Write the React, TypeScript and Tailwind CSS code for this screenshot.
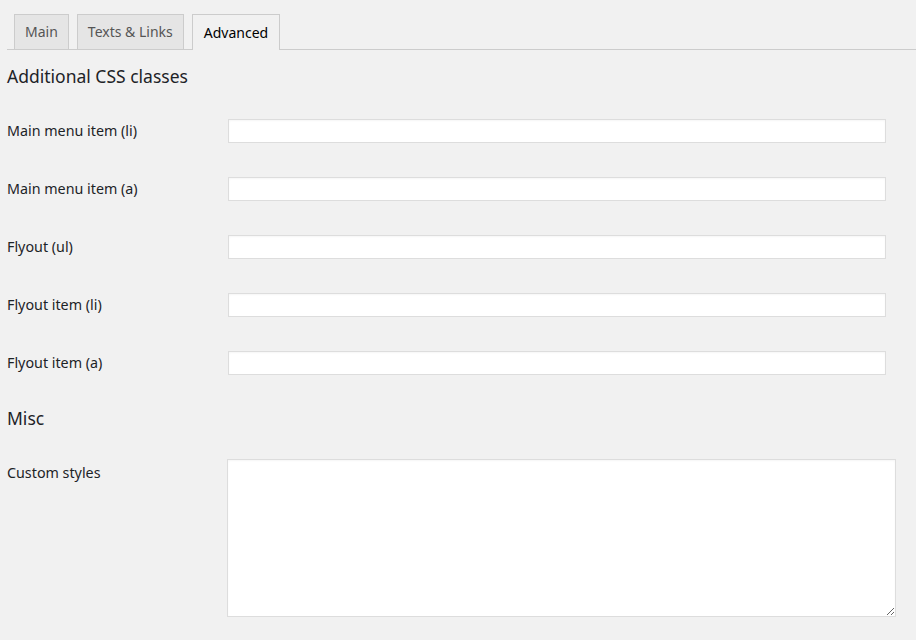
import React from 'react';

const rows = [
  'Main menu item (li)',
  'Main menu item (a)',
  'Flyout (ul)',
  'Flyout item (li)',
  'Flyout item (a)',
];

const tabs = ['Main', 'Texts & Links', 'Advanced'];

export default function App() {
  return (
    <div
      className="min-h-[640px] w-[916px] bg-[#f1f1f1] text-[#1d2327]"
      style={{ fontFamily: '"Noto Sans", "DejaVu Sans", sans-serif' }}
    >
      {/* tabs */}
      <div className="ml-[7px] flex h-[50px] items-end gap-[8px] border-b border-[#ccc] pl-[7px]">
        {tabs.map((t) => {
          const active = t === 'Advanced';
          return (
            <div
              key={t}
              className={
                active
                  ? '-mb-px flex h-[36px] items-center border border-b-0 border-[#ccc] bg-[#f1f1f1] px-[11px] pb-[1px] text-[14px] text-black'
                  : 'flex h-[35px] items-center border border-b-0 border-[#ccc] bg-[#e5e5e5] px-[10px] pb-[1px] text-[14px] text-[#555]'
              }
            >
              {t}
            </div>
          );
        })}
      </div>

      <div className="pl-[7px]">
        <h2 className="flex h-[52px] items-center text-[17.5px] font-normal">Additional CSS classes</h2>

        {rows.map((r) => (
          <div key={r} className="flex h-[58px] items-center">
            <label className="w-[221px] shrink-0 text-[14.3px]">{r}</label>
            <input
              type="text"
              className="h-[24px] w-[658px] border border-[#ddd] bg-white outline-none shadow-[inset_0_1px_2px_rgba(0,0,0,0.04)]"
            />
          </div>
        ))}

        <h2 className="flex h-[52px] items-center text-[17.5px] font-normal">Misc</h2>

        <div className="flex pt-[15px]">
          <label className="w-[220px] shrink-0 pt-[3px] text-[14.3px]">Custom styles</label>
          <textarea className="h-[158px] w-[669px] border border-[#ddd] bg-white outline-none shadow-[inset_0_1px_2px_rgba(0,0,0,0.04)]" />
        </div>
      </div>
    </div>
  );
}
